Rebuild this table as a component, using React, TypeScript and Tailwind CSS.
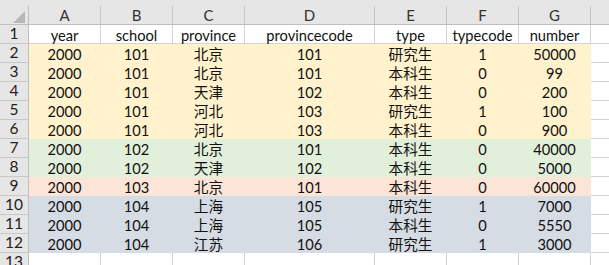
import React from 'react';

type Fill = 'w' | 'o' | 'g' | 'p' | 'b';

const cols = [
	{ key: 'A', w: 'w-[72px]' },
	{ key: 'B', w: 'w-[72px]' },
	{ key: 'C', w: 'w-[72px]' },
	{ key: 'D', w: 'w-[130px]' },
	{ key: 'E', w: 'w-[72px]' },
	{ key: 'F', w: 'w-[72px]' },
	{ key: 'G', w: 'w-[72px]' },
];

// Excel-ish fills, the gridline under a fill takes the fill colour
const fills: Record<Fill, string> = {
	w: 'bg-white border-[#d4d4d4]',
	o: 'bg-[#fff2cc] border-[#fff2cc]',
	g: 'bg-[#e2efda] border-[#e2efda]',
	p: 'bg-[#fce4d6] border-[#fce4d6]',
	b: 'bg-[#d6dce4] border-[#d6dce4]',
};

const rows: { fill: Fill; cells: string[] }[] = [
	{ fill: 'w', cells: ['year', 'school', 'province', 'provincecode', 'type', 'typecode', 'number'] },
	{ fill: 'o', cells: ['2000', '101', '北京', '101', '研究生', '1', '50000'] },
	{ fill: 'o', cells: ['2000', '101', '北京', '101', '本科生', '0', '99'] },
	{ fill: 'o', cells: ['2000', '101', '天津', '102', '本科生', '0', '200'] },
	{ fill: 'o', cells: ['2000', '101', '河北', '103', '研究生', '1', '100'] },
	{ fill: 'o', cells: ['2000', '101', '河北', '103', '本科生', '0', '900'] },
	{ fill: 'g', cells: ['2000', '102', '北京', '101', '本科生', '0', '40000'] },
	{ fill: 'g', cells: ['2000', '102', '天津', '102', '本科生', '0', '5000'] },
	{ fill: 'p', cells: ['2000', '103', '北京', '101', '本科生', '0', '60000'] },
	{ fill: 'b', cells: ['2000', '104', '上海', '105', '研究生', '1', '7000'] },
	{ fill: 'b', cells: ['2000', '104', '上海', '105', '本科生', '0', '5550'] },
	{ fill: 'b', cells: ['2000', '104', '江苏', '106', '研究生', '1', '3000'] },
	{ fill: 'w', cells: ['', '', '', '', '', '', ''] },
];

const App = () => {
	return (
		<div className="w-[609px] h-[265px] overflow-hidden bg-white font-[Lato,'Noto_Sans_CJK_SC',sans-serif] text-[#111]">
			{/* column letters */}
			<div className="bg-[#e6e6e6] pt-[6px] border-b border-[#bfbfbf]">
				<div className="flex h-[18px]">
					<div className="w-[29px] shrink-0 border-r border-[#bfbfbf] relative">
						<svg width="12" height="12" viewBox="0 0 12 12" className="absolute right-[3px] bottom-[1px]">
							<polygon points="12,0 12,12 0,12" fill="#b8b8b8" />
						</svg>
					</div>
					{cols.map((c) => (
						<div
							key={c.key}
							className={`${c.w} shrink-0 border-r border-[#c6c6c6] flex items-center justify-center text-[15px] leading-none text-[#333]`}
						>
							{c.key}
						</div>
					))}
					<div className="flex-1" />
				</div>
			</div>
			{rows.map((r, ri) => (
				<div key={ri} className="flex h-[19px]">
					<div className="w-[29px] shrink-0 bg-[#e6e6e6] border-r border-b border-r-[#bfbfbf] border-b-[#c8c8c8] flex items-center justify-center text-[15.5px] leading-none text-[#222]">
						{ri + 1}
					</div>
					{r.cells.map((c, ci) => (
						<div
							key={ci}
							className={`${cols[ci].w} shrink-0 border-r border-b ${fills[r.fill]} flex items-end justify-center text-[14.67px] leading-[18px] whitespace-nowrap`}
						>
							<span className="relative top-[2px]">{c}</span>
						</div>
					))}
					<div className="flex-1 border-b border-[#d4d4d4]" />
				</div>
			))}
		</div>
	);
};

export default App;
